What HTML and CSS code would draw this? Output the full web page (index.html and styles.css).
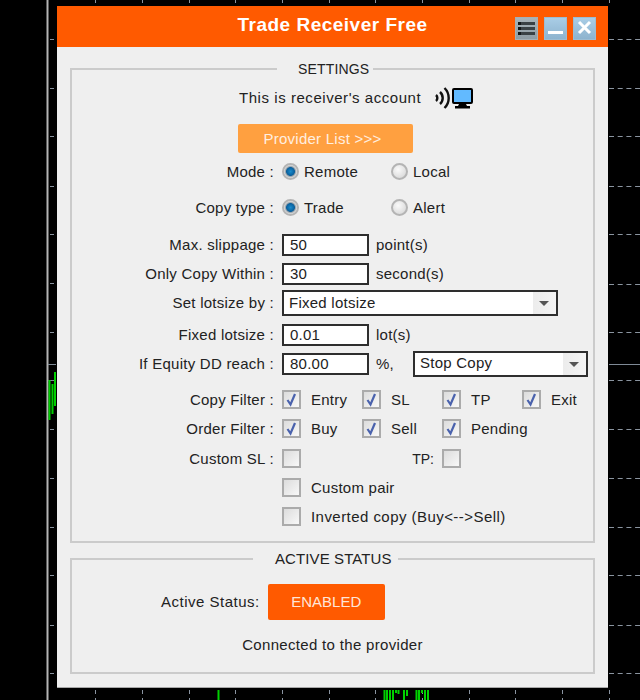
FILE: index.html
```html
<!DOCTYPE html>
<html lang="en">
<head>
<meta charset="utf-8">
<title>Trade Receiver Free</title>
<link rel="stylesheet" href="styles.css">
</head>
<body>
<svg class="chart" width="640" height="700" viewBox="0 0 640 700" aria-hidden="true">
  <path class="axis" d="M47.5 0V700"/>
  <path class="tick" d="M95.5 0v3M142.5 0v3M189.5 0v3M235.5 0v3M282.5 0v3M329.5 0v3M375.5 0v3M422.5 0v3M469.5 0v3M515.5 0v3M562.5 0v3M609.5 0v3"/>
  <path class="tick" d="M95.5 690v4M142.5 690v4M189.5 690v4M235.5 690v4M282.5 690v4M329.5 690v4M375.5 690v4M422.5 690v4M469.5 690v4M515.5 690v4M562.5 690v4M609.5 690v4M95.5 698v2M142.5 698v2M189.5 698v2M235.5 698v2M282.5 698v2M329.5 698v2M375.5 698v2M422.5 698v2M469.5 698v2M515.5 698v2M562.5 698v2M609.5 698v2"/>
  <path class="tick" d="M50 39.5h4M50 88.5h4M50 136.5h4M50 186.5h4M50 234.5h4M50 283.5h4M50 332.5h4M50 429.5h4M50 478.5h4M50 527.5h4M50 575.5h4M50 625.5h4M50 673.5h4"/>
  <path class="grid" d="M609 39.5H640M609 88.5H640M609 136.5H640M609 186.5H640M609 234.5H640M609 284.5H640M609 332.5H640M609 380.5H640M609 429.5H640M609 478.5H640M609 527.5H640M609 575.5H640M609 625.5H640M609 673.5H640"/>
  <path class="price" d="M48 364.5h8M609 364.5H640M48 380.5h8"/>
  <path class="candle" d="M49.500 380V420M52.500 384V414M55 372V406M218.500 690V700M384.500 690V700M387 690V700M390 690V700M393 690V700M396 690V693M398.500 690V694M404 690V700M407 690V696M416.500 690V700M419 690V700M422 690V693M425 690V700M428 690V700"/>
</svg>

<main class="panel">
  <header class="titlebar">
    <span></span>
    <h1 class="title">Trade Receiver Free</h1>
    <div class="win-actions">
      <span class="win-btn win-btn-menu">
        <svg width="19" height="19" viewBox="0 0 19 19"><path class="menu-lines" d="M1 4.500h17M1 9.500h17M1 14.500h17"/><path class="menu-dots" d="M1 4.500h3M1 9.500h3M1 14.500h3"/></svg>
      </span>
      <span class="win-btn">
        <svg width="19" height="19" viewBox="0 0 19 19"><path class="win-glyph" d="M2 13.500h15"/></svg>
      </span>
      <span class="win-btn">
        <svg width="19" height="19" viewBox="0 0 19 19"><path class="win-glyph" d="M4 3l11 11M15 3L4 14"/></svg>
      </span>
    </div>
  </header>

  <fieldset class="group group-settings">
    <legend class="group-title">SETTINGS</legend>

    <div class="account">
      <span class="account-text">This is receiver's account</span>
      <svg class="account-icon" width="41" height="24" viewBox="0 0 41 24">
        <path class="wave" d="M3 9a4 4 0 0 1 0 6"/>
        <path class="wave" d="M7 6a8 8 0 0 1 0 12"/>
        <path class="wave" d="M11.500 2a14 14 0 0 1 0 20"/>
        <rect class="screen" x="20" y="3" width="19" height="14" rx="1"/>
        <path d="M26 18h7l1 2h3v2.500H22V20h3z"/>
      </svg>
    </div>

    <div class="provider-row"><span class="btn btn-provider">Provider List &gt;&gt;&gt;</span></div>

    <div class="row">
      <span class="label">Mode :</span>
      <div class="options">
        <span class="option"><i class="radio radio-on"></i>Remote</span>
        <span class="option"><i class="radio"></i>Local</span>
      </div>
    </div>
    <div class="row row-sep">
      <span class="label">Copy type :</span>
      <div class="options">
        <span class="option"><i class="radio radio-on"></i>Trade</span>
        <span class="option"><i class="radio"></i>Alert</span>
      </div>
    </div>

    <div class="row row-sep-lg">
      <span class="label">Max. slippage :</span>
      <div class="controls"><span class="field">50</span><span>point(s)</span></div>
    </div>
    <div class="row">
      <span class="label">Only Copy Within :</span>
      <div class="controls"><span class="field">30</span><span>second(s)</span></div>
    </div>
    <div class="row">
      <span class="label">Set lotsize by :</span>
      <div class="controls"><span class="select select-wide"><span class="select-text">Fixed lotsize</span><span class="select-arrow"></span></span></div>
    </div>
    <div class="row row-nudge">
      <span class="label">Fixed lotsize :</span>
      <div class="controls"><span class="field">0.01</span><span>lot(s)</span></div>
    </div>
    <div class="row">
      <span class="label">If Equity DD reach :</span>
      <div class="controls">
        <span class="field">80.00</span><span class="percent">%,</span>
        <span class="select select-stop"><span class="select-text">Stop Copy</span><span class="select-arrow"></span></span>
      </div>
    </div>

    <div class="row row-sep">
      <span class="label">Copy Filter :</span>
      <div class="checks">
        <span class="check-item"><i class="check"><svg width="15" height="15" viewBox="0 0 15 15"><path d="M3.500 8l3 4.500L11 2"/></svg></i>Entry</span>
        <span class="check-item"><i class="check"><svg width="15" height="15" viewBox="0 0 15 15"><path d="M3.500 8l3 4.500L11 2"/></svg></i>SL</span>
        <span class="check-item"><i class="check"><svg width="15" height="15" viewBox="0 0 15 15"><path d="M3.500 8l3 4.500L11 2"/></svg></i>TP</span>
        <span class="check-item"><i class="check"><svg width="15" height="15" viewBox="0 0 15 15"><path d="M3.500 8l3 4.500L11 2"/></svg></i>Exit</span>
      </div>
    </div>
    <div class="row">
      <span class="label">Order Filter :</span>
      <div class="checks">
        <span class="check-item"><i class="check"><svg width="15" height="15" viewBox="0 0 15 15"><path d="M3.500 8l3 4.500L11 2"/></svg></i>Buy</span>
        <span class="check-item"><i class="check"><svg width="15" height="15" viewBox="0 0 15 15"><path d="M3.500 8l3 4.500L11 2"/></svg></i>Sell</span>
        <span class="check-item check-item-wide"><i class="check"><svg width="15" height="15" viewBox="0 0 15 15"><path d="M3.500 8l3 4.500L11 2"/></svg></i>Pending</span>
      </div>
    </div>
    <div class="row row-tick">
      <span class="label">Custom SL :</span>
      <div class="checks">
        <span class="check-item"><i class="check"></i></span>
        <span class="tp-label">TP:</span>
        <span class="check-item"><i class="check"></i></span>
      </div>
    </div>
    <div class="row">
      <span></span>
      <span class="check-item"><i class="check"></i>Custom pair</span>
    </div>
    <div class="row">
      <span></span>
      <span class="check-item check-item-long"><i class="check"></i>Inverted copy (Buy&lt;--&gt;Sell)</span>
    </div>
  </fieldset>

  <fieldset class="group group-status">
    <legend class="group-title">ACTIVE STATUS</legend>
    <div class="status-row">
      <span class="status-label">Active Status:</span>
      <span class="btn btn-enabled">ENABLED</span>
    </div>
    <p class="connection">Connected to the provider</p>
  </fieldset>
</main>
</body>
</html>
```

FILE: styles.css
```css
* { box-sizing: border-box; }

html, body { height: 100%; }

body {
  margin: 0;
  padding: 6px 0 0 57px;
  background: #000;
  font-family: "Liberation Sans", Arial, sans-serif;
  font-size: 15px;
  line-height: 16px;
  letter-spacing: 0.25px;
  color: #222;
  overflow: hidden;
}

.chart {
  position: absolute;
  left: 0;
  top: 0;
  fill: none;
}
.axis { stroke: #b4b4b4; stroke-width: 2; }
.tick { stroke: #8a94a0; stroke-width: 1; }
.grid { stroke: #8a94a0; stroke-width: 1; stroke-dasharray: 5 3.700; }
.price { stroke: #7f8a96; stroke-width: 1; }
.candle { stroke: #00d000; stroke-width: 2; }

.panel {
  position: relative;
  width: 551px;
  height: 682px;
  background: #efefef;
  border-bottom: 1px solid #a8a8a8;
}

.titlebar {
  display: grid;
  grid-template-columns: 1fr auto 1fr;
  align-items: center;
  height: 41px;
  background: #ff5a00;
}
.title {
  margin: 0;
  font-size: 19px;
  line-height: 22px;
  font-weight: 700;
  color: #fff;
  letter-spacing: 0.5px;
  position: relative;
  top: -2px;
}
.win-actions {
  display: flex;
  justify-content: flex-end;
  gap: 6px;
  padding: 3px 12px 0 0;
}
.win-btn {
  display: flex;
  align-items: center;
  justify-content: center;
  width: 23px;
  height: 23px;
  background: linear-gradient(#a9cde6, #8db3ce);
  border: 1px solid #9cbcd2;
}
.win-btn-menu {
  background: linear-gradient(#a8b4ba, #8e9ca4);
  border-color: #a5b0b6;
}
.win-btn svg { fill: none; }
.menu-lines { stroke: #3a4246; stroke-width: 3; }
.menu-dots { stroke: #14181a; stroke-width: 3; }
.win-glyph { stroke: #fff; stroke-width: 3; }

.group {
  display: block;
  min-width: 0;
  width: 525px;
  margin: 0 0 0 13px;
  padding: 0;
  border: 2px solid #cbcbcb;
}
.group-settings { height: 482px; margin-top: 14px; }
.group-status { height: 123px; margin-top: 8px; }
.group-title {
  height: 16px;
}
.group-settings .group-title { margin-left: 205px; padding: 0 4px 0 21px; font-size: 14px; letter-spacing: 0.15px; }
.group-status .group-title { margin-left: 181px; padding: 0 6px 0 22px; letter-spacing: 0.1px; }

.account {
  display: flex;
  align-items: center;
  gap: 12px;
  height: 24px;
  margin: 9px 0 0 167px;
}
.account-text { letter-spacing: 0.55px; }
.account-icon { fill: #000; }
.wave { fill: none; stroke: #111; stroke-width: 2.400; }
.screen { fill: #62baff; stroke: #000; stroke-width: 2; }

.provider-row {
  display: flex;
  justify-content: center;
  margin: 14px 14px 4px 0;
}
.btn {
  display: flex;
  align-items: center;
  justify-content: center;
  border-radius: 2px;
}
.btn-provider {
  width: 175px;
  height: 29px;
  padding-right: 6px;
  background: #ffa040;
  color: #ffefe0;
}
.btn-enabled {
  width: 117px;
  height: 36px;
  background: #ff5a00;
  color: #ffe6d8;
  letter-spacing: 0;
}

.row {
  display: grid;
  grid-template-columns: 202px 1fr;
  column-gap: 8px;
  align-items: center;
  height: 29px;
}
.row-sep { margin-top: 7px; }
.row-sep-lg { margin-top: 8px; }
.row-nudge { margin-top: 3px; }
.row-tick { margin-top: 1px; }
.label { text-align: right; }

.options { display: grid; grid-template-columns: 109px 109px; }
.option { display: flex; align-items: center; gap: 5px; }

.radio {
  display: block;
  width: 17px;
  height: 17px;
  border-radius: 50%;
  border: 2px solid #b4b4b4;
  background: radial-gradient(circle at 40% 35%, #fafafa, #dcdcdc 75%);
}
.radio-on {
  background: radial-gradient(circle closest-side, #1b8ccc 0, #0a5f9c 62%, #8d99a2 72%, #ececec 100%);
}

.controls { display: flex; align-items: center; gap: 7px; }
.field {
  display: flex;
  align-items: center;
  width: 87px;
  height: 22px;
  padding: 1px 0 0 6px;
  background: #fff;
  border: 2px solid #2e2e2e;
}
.percent { width: 30px; }
.select {
  display: flex;
  align-items: stretch;
  height: 26px;
  background: #fff;
  border: 2px solid #2e2e2e;
}
.select-wide { width: 276px; }
.select-stop { width: 175px; }
.select-stop .select-text { padding-bottom: 2px; }
.select-text {
  flex: 1;
  align-self: center;
  padding-left: 5px;
}
.select-arrow {
  position: relative;
  width: 23px;
  background: linear-gradient(90deg, #ececec, #f4f4f4);
}
.select-arrow::after {
  content: "";
  position: absolute;
  left: 6px;
  top: 9px;
  border-left: 5px solid transparent;
  border-right: 5px solid transparent;
  border-top: 5px solid #555;
}

.checks { display: grid; grid-template-columns: repeat(4, 80px); align-items: center; }
.check-item { display: flex; align-items: center; gap: 10px; white-space: nowrap; }
.check-item-wide { grid-column: span 2; }
.check-item-long { letter-spacing: 0.45px; }
.tp-label { text-align: right; padding-right: 8px; font-size: 14px; letter-spacing: 0; }
.check {
  display: flex;
  align-items: center;
  justify-content: center;
  flex: none;
  width: 19px;
  height: 19px;
  border: 2px solid #ababab;
  background: linear-gradient(135deg, #dcdcdc, #f8f8f8);
}
.check svg { fill: none; }
.check path { stroke: #4a62ad; stroke-width: 2.200; }

.status-row {
  display: flex;
  align-items: center;
  gap: 8px;
  margin: 17px 0 0 89px;
}
.status-label { letter-spacing: 0.5px; }
.connection {
  margin: 17px 0 0;
  text-align: center;
  letter-spacing: 0.32px;
}
```
